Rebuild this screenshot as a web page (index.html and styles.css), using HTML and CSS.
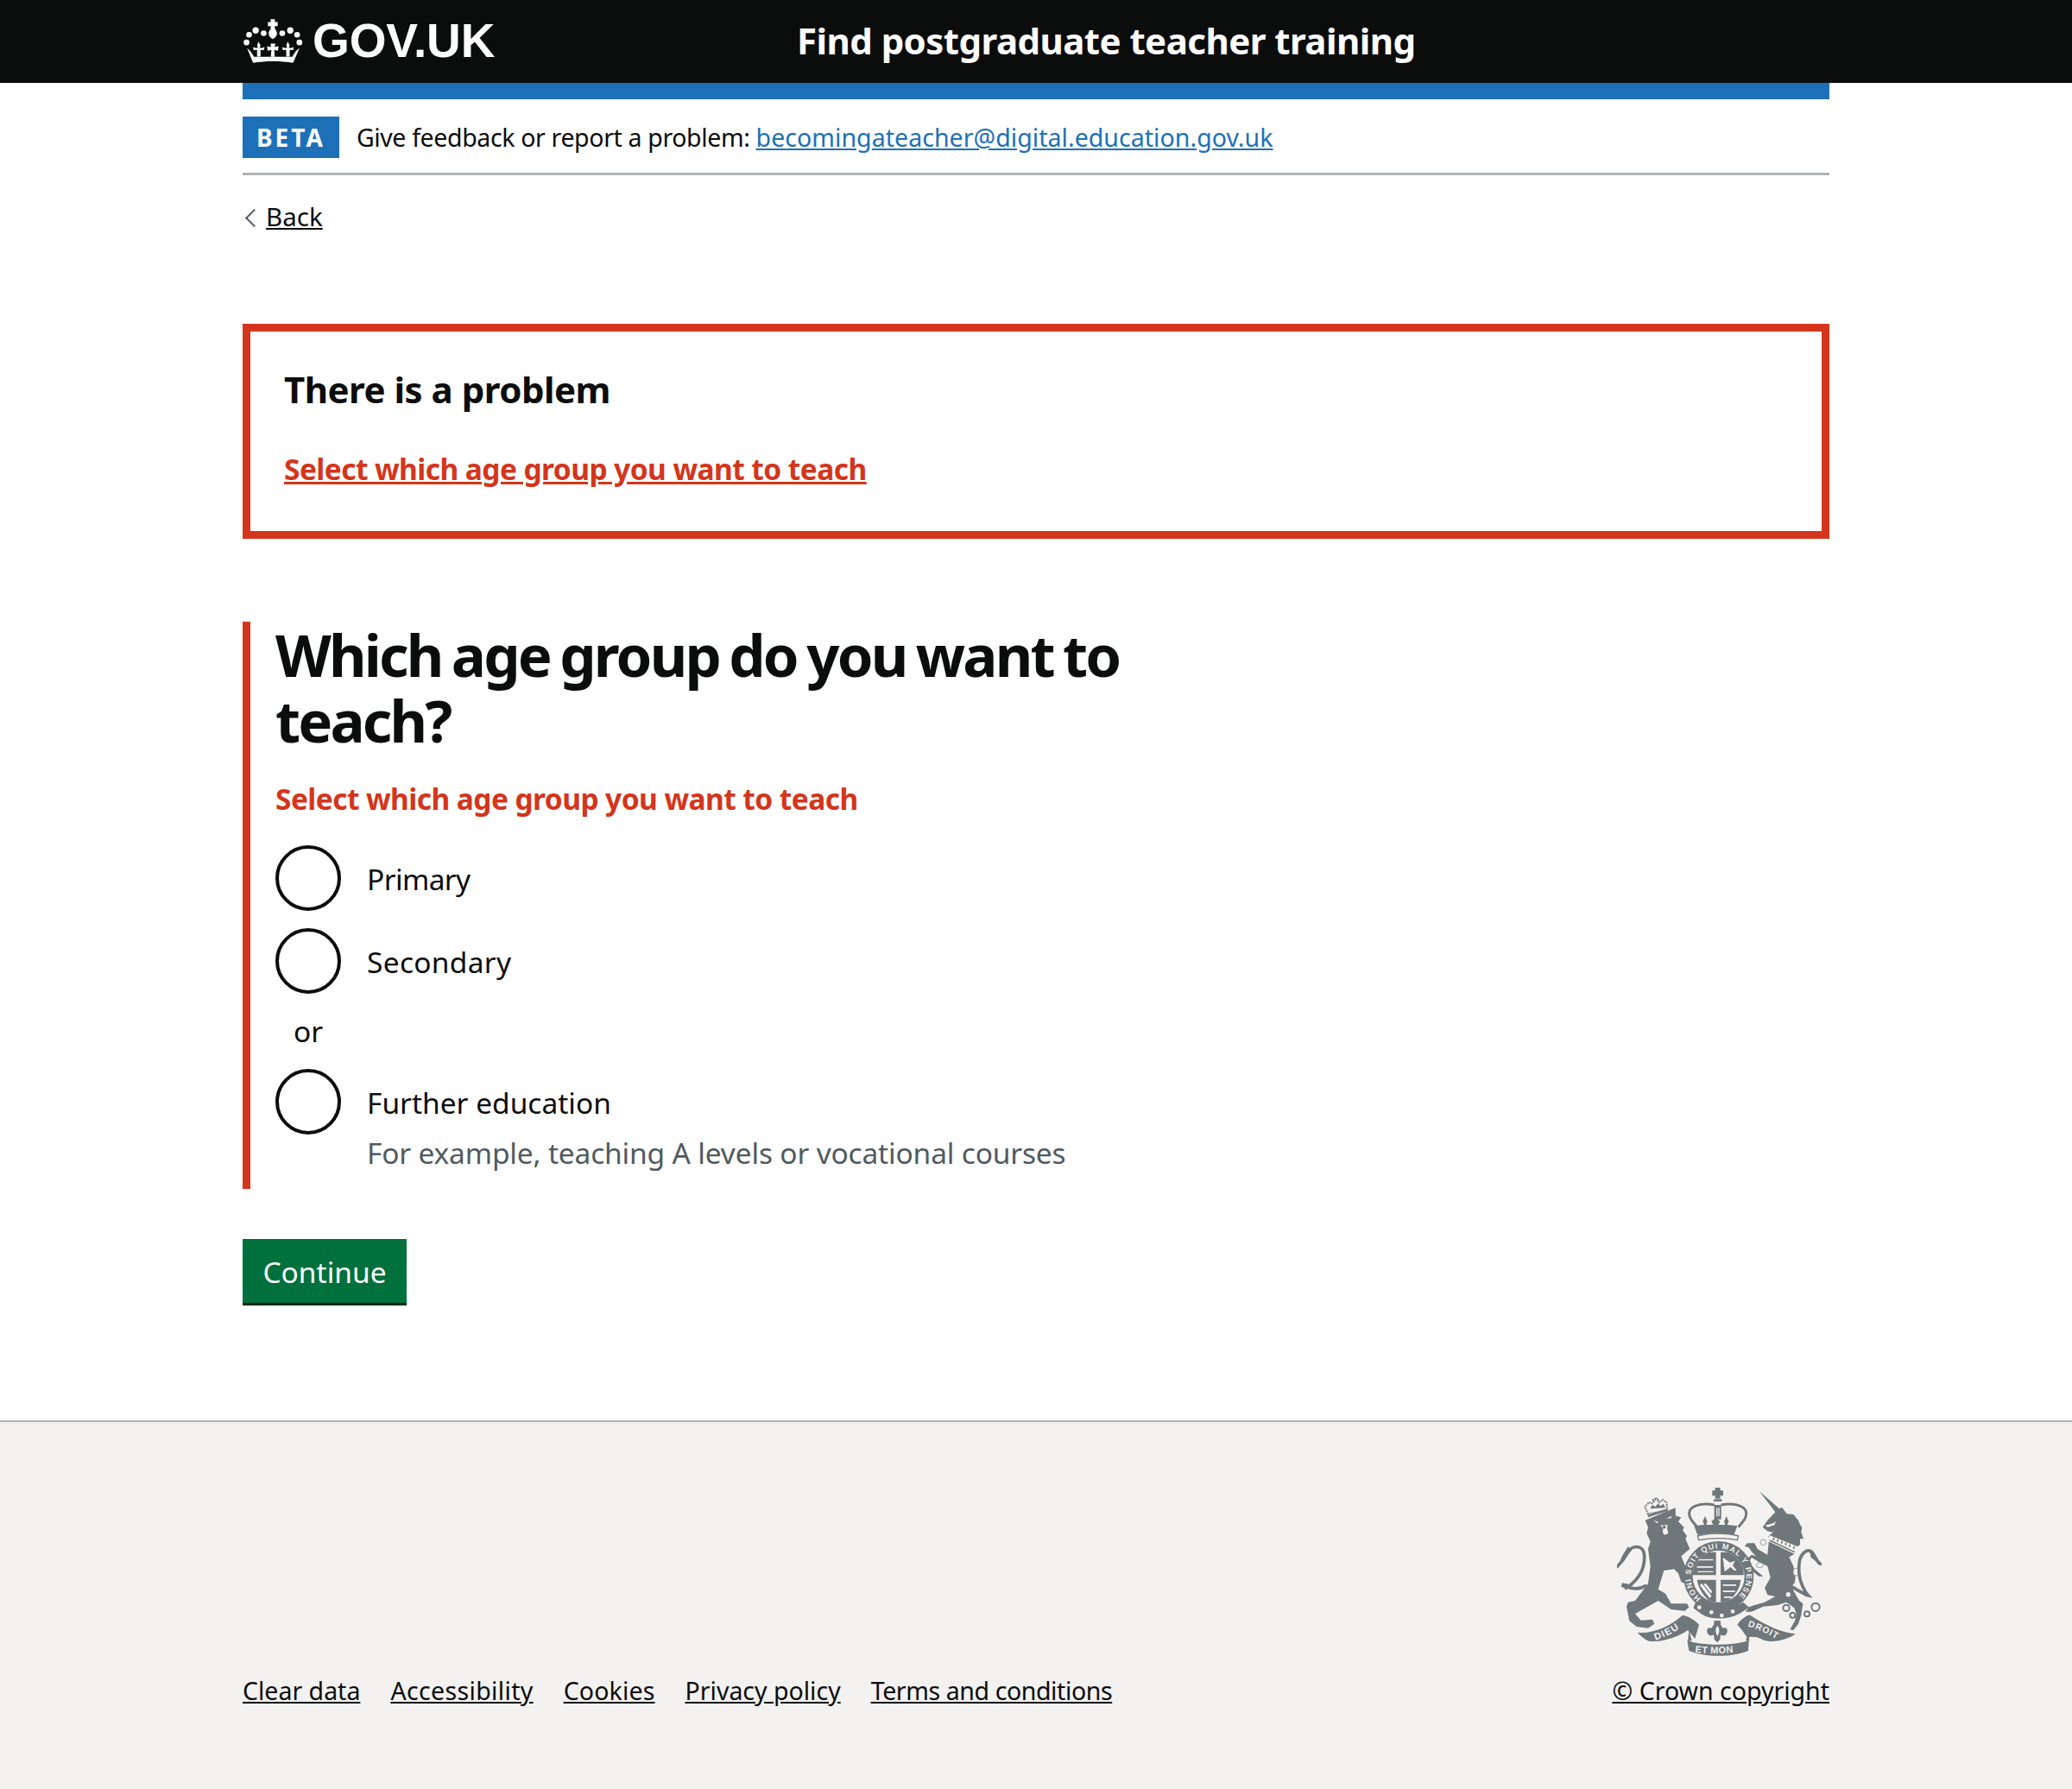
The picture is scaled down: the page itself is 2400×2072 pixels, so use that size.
FILE: index.html
```html
<!DOCTYPE html>
<html lang="en">
<head>
<meta charset="utf-8">
<title>Find postgraduate teacher training</title>
<link rel="stylesheet" href="styles.css">
</head>
<body>
<header class="top">
  <div class="wrap top-row">
    <a class="logo" href="#">
      <svg class="crown" viewBox="15 25 213 160" aria-hidden="true">
        <g fill="#fff">
          <circle cx="28" cy="110" r="10"/><circle cx="37" cy="83" r="10"/><circle cx="60" cy="68" r="11"/><circle cx="88" cy="78" r="10"/>
          <circle cx="153" cy="78" r="10"/><circle cx="181" cy="68" r="11"/><circle cx="205" cy="83" r="10"/><circle cx="213" cy="110" r="10"/>
          <path d="M113 29h15v10h10v15h-10v9c6 8 9 14 7 22-2 7-8 12-14 15-7-3-12-8-14-15-2-8 1-14 7-22v-9h-10V39h10z" transform="translate(-1 0) scale(1 .98)"/>
          <path d="M70 107l7 13-3 9h9l8-3-2 11-9-1-3 1v22H65v-22l-3-1-9 1-2-11 8 3h9l-3-9z"/>
          <path d="M172 107l7 13-3 9h9l8-3-2 11-9-1-3 1v22h-12v-22l-3-1-9 1-2-11 8 3h9l-3-9z"/>
          <path d="M112 114h17l-3 12 14-3-2 16-13-3 2 24h-14l2-24-13 3-2-16 14 3z"/>
          <path d="M30 130c10 7 17 17 24 30h134c7-13 14-23 25-30l-22 51c-46-7-94-7-140 0z"/>
        </g>
      </svg>
      <span class="logo-text">GOV.UK</span>
    </a>
    <a class="service" href="#">Find postgraduate teacher training</a>
  </div>
</header>
<div class="wrap">
  <div class="stripe"></div>
  <div class="phase">
    <strong class="tag">BETA</strong>
    <span class="phase-text">Give feedback or report a problem: <a class="link" href="#">becomingateacher@digital.education.gov.uk</a></span>
  </div>
  <a class="back" href="#">Back</a>
  <main class="main">
    <section class="summary">
      <h2 class="summary-title">There is a problem</h2>
      <a class="summary-link" href="#">Select which age group you want to teach</a>
    </section>
    <form>
      <div class="group">
        <h1 class="heading">Which age group do you want to teach?</h1>
        <p class="error">Select which age group you want to teach</p>
        <div class="radio"><span class="dot"></span><span class="label label-tight">Primary</span></div>
        <div class="radio"><span class="dot"></span><span class="label label-wide">Secondary</span></div>
        <div class="or">or</div>
        <div class="radio radio-hint">
          <span class="dot"></span>
          <div><span class="label">Further education</span><p class="hint">For example, teaching A levels or vocational courses</p></div>
        </div>
      </div>
      <button class="btn" type="button">Continue</button>
    </form>
  </main>
</div>
<footer class="foot">
  <div class="wrap foot-row">
    <ul class="foot-links">
      <li><a href="#">Clear data</a></li>
      <li><a class="wide" href="#">Accessibility</a></li>
      <li><a href="#">Cookies</a></li>
      <li><a href="#">Privacy policy</a></li>
      <li><a class="tight" href="#">Terms and conditions</a></li>
    </ul>
    <a class="copy" href="#">
      <svg class="crest" viewBox="0 0 240 196" aria-hidden="true">
        <defs>
          <path id="garter" d="M364 456A97 97 0 1 1 486 456"/>
          <path id="ribbon-l" d="M205 602Q262 585 306 548"/>
          <path id="ribbon-m" d="M340 644Q420 654 506 640"/>
          <path id="ribbon-r" d="M526 554Q590 573 645 610"/>
          <clipPath id="disc"><circle cx="425" cy="380" r="90"/></clipPath>
        </defs>
        <!-- lion, in 3x coordinates -->
        <g transform="translate(-14 -8) scale(.33333)" class="ink">
          <path d="M150 118l-11-24 14-16 10 3 8-7-3-5 7-1 1-6 5 6 6-1-3 6 5 5 12-9 13 9 2 20 2 8z" fill="none" class="line-dot"/>
          <path d="M148 122l68-22 2 8-68 22z"/>
          <path d="M157 100l8-14 10 8 9-12 9 9 10-8 7 14z"/>
          <path d="M140 140L245 97 246 125 265 130 255 145 275 165 270 175 285 195 280 205 295 240 265 265 300 350 305 360 295 365 265 355 255 325 240 310 205 315 185 380 210 395 230 430 285 430 292 442 278 455 230 450 185 420 105 465 125 488 165 485 172 500 150 515 110 510 85 490 75 440 80 425 105 420 150 360 158 300 150 240 158 215 145 185 150 165z"/>
          <path d="M168 140l18 6-4 5z M214 134l16-8 1 7z M192 158l26-2-2 12 4 18-12 5-7-7 1-16z" class="paper"/>
          <path d="M200 160l12-1-2 10-8 0z"/>
          <g class="stroke">
            <path d="M140 368C110 388 82 372 62 368"/>
            <path d="M88 366C120 340 142 305 136 255 130 225 92 225 78 255 70 270 60 285 42 302"/>
          </g>
          <path d="M80 232l14 12-47 52 12-30-18 30zM58 358l34 6-20 20z"/>
        </g>
        <!-- unicorn, in 3x coordinates -->
        <g transform="translate(106 -8) scale(.33333)" class="ink">
          <path d="M177 40L246 100 255 95 272 118 295 120 312 140 318 155 325 165 322 180 330 205 318 205 318 225 305 235 298 258 280 268 295 300 302 340 295 385 315 420 328 430 322 470 312 500 295 522 283 520 300 490 305 465 298 445 270 425 240 435 190 440 150 458 128 458 140 442 160 435 195 425 232 405 205 400 195 375 215 340 205 300 175 285 150 270 140 285 160 310 190 335 175 335 130 300 128 280 150 260 165 265 150 250 140 235 125 230 135 220 160 220 170 240 205 260 210 205 208 195 220 185 235 172 222 182 205 178 195 170 188 165 205 140 232 112z"/>
          <path d="M196 158l28-7 10-7-5 13-22 7z" class="paper"/>
          <path d="M212 192l20 8 78 32-10 26-95-46z" class="paper"/>
          <path d="M224 200h5v9h-5zM238 206h5v9h-5zM252 212h5v9h-5zM266 218h5v9h-5zM280 224h5v9h-5zM294 230h5v9h-5zM214 208l86 41-2 4-86-41z"/>
          <ellipse cx="305" cy="320" rx="11" ry="13" class="hole"/>
          <circle cx="300" cy="366" r="7" class="paper"/><circle cx="277" cy="398" r="8" class="paper"/>
          <circle cx="190" cy="217" r="10" class="hole"/><ellipse cx="178" cy="296" rx="12" ry="9" class="hole"/>
          <g class="ring"><circle cx="270" cy="445" r="11"/><circle cx="292" cy="470" r="9"/><circle cx="342" cy="466" r="9"/><circle cx="372" cy="442" r="14"/></g>
          <g class="stroke"><path d="M340 395C325 370 310 340 315 290 318 258 340 240 355 248 368 256 372 280 388 292"/><path d="M297 375C310 385 325 390 340 400"/></g>
          <path d="M350 242l26 24 12 28-32-24zM336 382l26 28-28-6z"/>
        </g>
        <!-- crown, shield, garter, ribbons in 3x coordinates -->
        <g transform="translate(-24 -23) scale(.33333)" class="ink">
          <path d="M413 72h18v10h10v18h-10v10h-18v-10h-10V82h10z"/>
          <path d="M408 112h28v8h-28z"/>
          <path d="M410 132h24v50h-24zM417 142v30h4v-30zM424 142v30h4v-30z" fill-rule="evenodd"/>
          <path d="M348 206C330 185 318 170 325 152c9-20 50-28 85-20M496 206c18-21 30-36 23-54-9-20-50-28-85-20" class="dots"/>
          <path d="M340 205l35-4-5-12 8-18 8 18-4 12h24l-6-12 15-12 15 12-6 12h24l-4-12 8-18 8 18-5 12 35 4-12 32c-40-10-88-10-126 0z"/>
          <path d="M352 240c38-12 104-12 142 0l-4 14c-40-8-88-8-134 0z" class="paper outline"/>
          <circle cx="425" cy="380" r="122"/>
          <circle cx="425" cy="380" r="90" class="paper"/>
          <g clip-path="url(#disc)">
            <path d="M335 296h81v80h-81zM432 296h80v80h-80zM350 392h66v88c-32-16-60-50-66-88zM432 392h70c-4 40-30 70-70 88z"/>
            <g class="paper">
              <path d="M350 320h56v5h-56zM350 345h56v5h-56zM352 362h54v4h-54zM440 314l24 18 18-6-8 16 14 18h-8l-14-12-20 16z"/>
              <path d="M440 408h46v5h-46zM440 430h42v5h-42zM444 450h28v5h-28zM366 404l34 44-6 8-34-44zM380 404l22 28-3 8-26-32z"/>
            </g>
          </g>
          <path d="M345 470c50 36 110 36 166 0l20 18-34 22c-42 22-96 22-130 2l-30-22z"/>
          <circle cx="358" cy="488" r="7" class="paper"/>
          <circle cx="400" cy="505" r="7" class="paper"/><circle cx="436" cy="516" r="7" class="paper"/><circle cx="474" cy="502" r="7" class="paper"/>
          <path d="M143 575c50 6 112-20 157-60 22 4 45 18 57 34l-14 48-25-30c-30 22-90 44-135 38-15-6-30-18-40-30z"/>
          <path d="M316 604c60 18 150 18 214 0l-2 34c-56 24-150 24-206 0z"/>
          <path d="M322 568l10 36-14 2zM528 566l-8 38 12 2z"/>
          <path d="M490 548c10-16 26-28 42-34 50 30 96 58 160 66-30 22-76 32-110 22-14-8-34-16-58-10-10-14-22-32-34-44z"/>
          <path d="M410 534h22l0 14 8 12c14-6 18 8 14 16-4 10-14 14-22 6l-2 18-10 10-10-10-2-18c-8 8-18 4-22-6-4-8 0-22 14-16l8-12z"/>
          <path d="M421 552c8 10 8 22 0 36-8-14-8-26 0-36z" class="paper"/>
          <g class="motto">
            <text font-size="27"><textPath href="#garter" textLength="465" lengthAdjust="spacing">HONI SOIT QUI MAL Y PENSE</textPath></text>
            <text font-size="34" letter-spacing="4"><textPath href="#ribbon-l">DIEU</textPath></text>
            <text font-size="33" letter-spacing="1"><textPath href="#ribbon-m" startOffset="3">ET MON</textPath></text>
            <text font-size="31" letter-spacing="3"><textPath href="#ribbon-r">DROIT</textPath></text>
          </g>
        </g>
      </svg>
      <span class="copy-text">© Crown copyright</span>
    </a>
  </div>
</footer>
</body>
</html>
```
FILE: styles.css
```css
* { box-sizing: border-box; }
html, body { margin: 0; padding: 0; }
body { min-height: 100vh; display: flex; flex-direction: column; font-family: "Noto Sans", Arial, sans-serif; color: #0b0c0c; background: #fff; font-size: 28.5px; }
a { color: inherit; }
.wrap { width: 1838px; margin: 0 auto; }

.top { background: #0b0c0c; height: 96px; flex: none; }
.top-row { display: flex; align-items: center; height: 96px; padding-bottom: 2px; }
.logo { display: flex; align-items: center; width: 642px; color: #fff; text-decoration: none; }
.crown { width: 71px; height: 53px; margin-right: 10px; flex: none; }
.logo-text { font-family: "Liberation Sans", Arial, sans-serif; font-weight: 700; font-size: 55px; line-height: 1; letter-spacing: -.1px; }
.service { color: #fff; text-decoration: none; font-weight: 700; font-size: 42px; line-height: 1; letter-spacing: -.55px; }

.stripe { height: 19px; background: #1d70b8; }
.phase { display: flex; align-items: center; gap: 20px; height: 88px; border-bottom: 3px solid #b1b4b6; padding-top: 3px; font-size: 28.5px; }
.phase-text { letter-spacing: -.36px; }
.tag { display: block; background: #1d70b8; color: #fff; font-size: 28px; line-height: 48px; height: 48px; padding: 0 16px; letter-spacing: 3px; }
.link { color: #1d70b8; letter-spacing: .05px; }
.back { display: inline-block; margin-top: 27px; padding-left: 27px; font-size: 29.5px; line-height: 42px; position: relative; }
.back::before { content: ""; position: absolute; left: 6px; top: 15px; width: 13px; height: 13px; border-left: 2px solid #505a5f; border-bottom: 2px solid #505a5f; transform: rotate(45deg); }

.main { padding-top: 103px; }
.summary { border: 9px solid #d4351c; padding: 42px 39px; height: 249px; margin-bottom: 96px; }
.summary-title { margin: 0; font-size: 42px; line-height: 50px; font-weight: 700; letter-spacing: -.5px; }
.summary-link { display: block; margin-top: 46px; color: #d4351c; font-weight: 700; font-size: 33.5px; line-height: 42px; letter-spacing: -.57px; }

.group { border-left: 9px solid #d4351c; padding-left: 29px; height: 657px; }
.heading { margin: 0; width: 1000px; font-size: 67px; line-height: 76px; font-weight: 700; letter-spacing: -2.8px; word-spacing: -3.3px; }
.error { margin: 31px 0 0; color: #d4351c; font-weight: 700; font-size: 33.5px; line-height: 45px; letter-spacing: -.57px; }
.radio { display: flex; align-items: center; gap: 30px; margin-top: 31px; height: 75px; font-size: 33.5px; }
.radio + .radio { margin-top: 21px; }
.radio-hint { align-items: flex-start; margin-top: 0; }
.dot { display: block; width: 76px; height: 76px; border: 4px solid #0b0c0c; border-radius: 50%; flex: none; background: #fff; }
.label { display: block; line-height: 45px; }
.label-tight { letter-spacing: -.6px; padding-top: 3px; }
.label-wide { letter-spacing: .3px; padding-top: 3px; }
.radio-hint .label { padding-top: 17px; }
.hint { margin: 13px 0 0; color: #505a5f; font-size: 33.5px; line-height: 45px; white-space: nowrap; letter-spacing: -.17px; }
.or { width: 76px; text-align: center; font-size: 33.5px; line-height: 45px; margin: 22px 0 21px; }

.btn { display: block; margin-top: 58px; width: 190px; height: 77px; background: #00703c; color: #fff; border: 0; border-bottom: 3px solid #002d18; border-radius: 0; font-family: inherit; font-size: 33.5px; line-height: 1; padding: 3px 0 0; }

.foot { flex: 1; margin-top: 133px; background: #f3f2f1; border-top: 2px solid #b1b4b6; }
.foot-row { display: flex; justify-content: space-between; align-items: flex-end; height: 331px; }
.foot-links { display: flex; gap: 35px; margin: 0; padding: 0; list-style: none; font-size: 28.5px; line-height: 40px; white-space: nowrap; }
.wide { letter-spacing: .35px; }
.tight { letter-spacing: -.4px; }
.foot-links li:nth-child(3) { letter-spacing: .15px; }
.copy { display: flex; flex-direction: column; align-items: flex-end; font-size: 28.5px; line-height: 40px; }
.crest { width: 240px; height: 196px; display: block; margin-bottom: 20px; margin-right: 6px; }
.copy-text { text-decoration: underline; }
.ink { fill: #6f777b; }
.paper { fill: #f3f2f1; }
.outline { stroke: #6f777b; stroke-width: 4px; }
.hole { fill: #f3f2f1; stroke: #6f777b; stroke-width: 2px; }
.ring circle { fill: none; stroke: #6f777b; stroke-width: 6px; }
.stroke path { fill: none; stroke: #6f777b; stroke-width: 11px; stroke-linecap: round; }
.dots { fill: none; stroke: #6f777b; stroke-width: 9px; stroke-dasharray: 7 5; stroke-linecap: round; }
.line-dot { stroke: #6f777b; stroke-width: 6px; stroke-dasharray: 5 3; }
.motto text { font-family: "Liberation Sans", Arial, sans-serif; font-weight: 700; fill: #f3f2f1; }
```
